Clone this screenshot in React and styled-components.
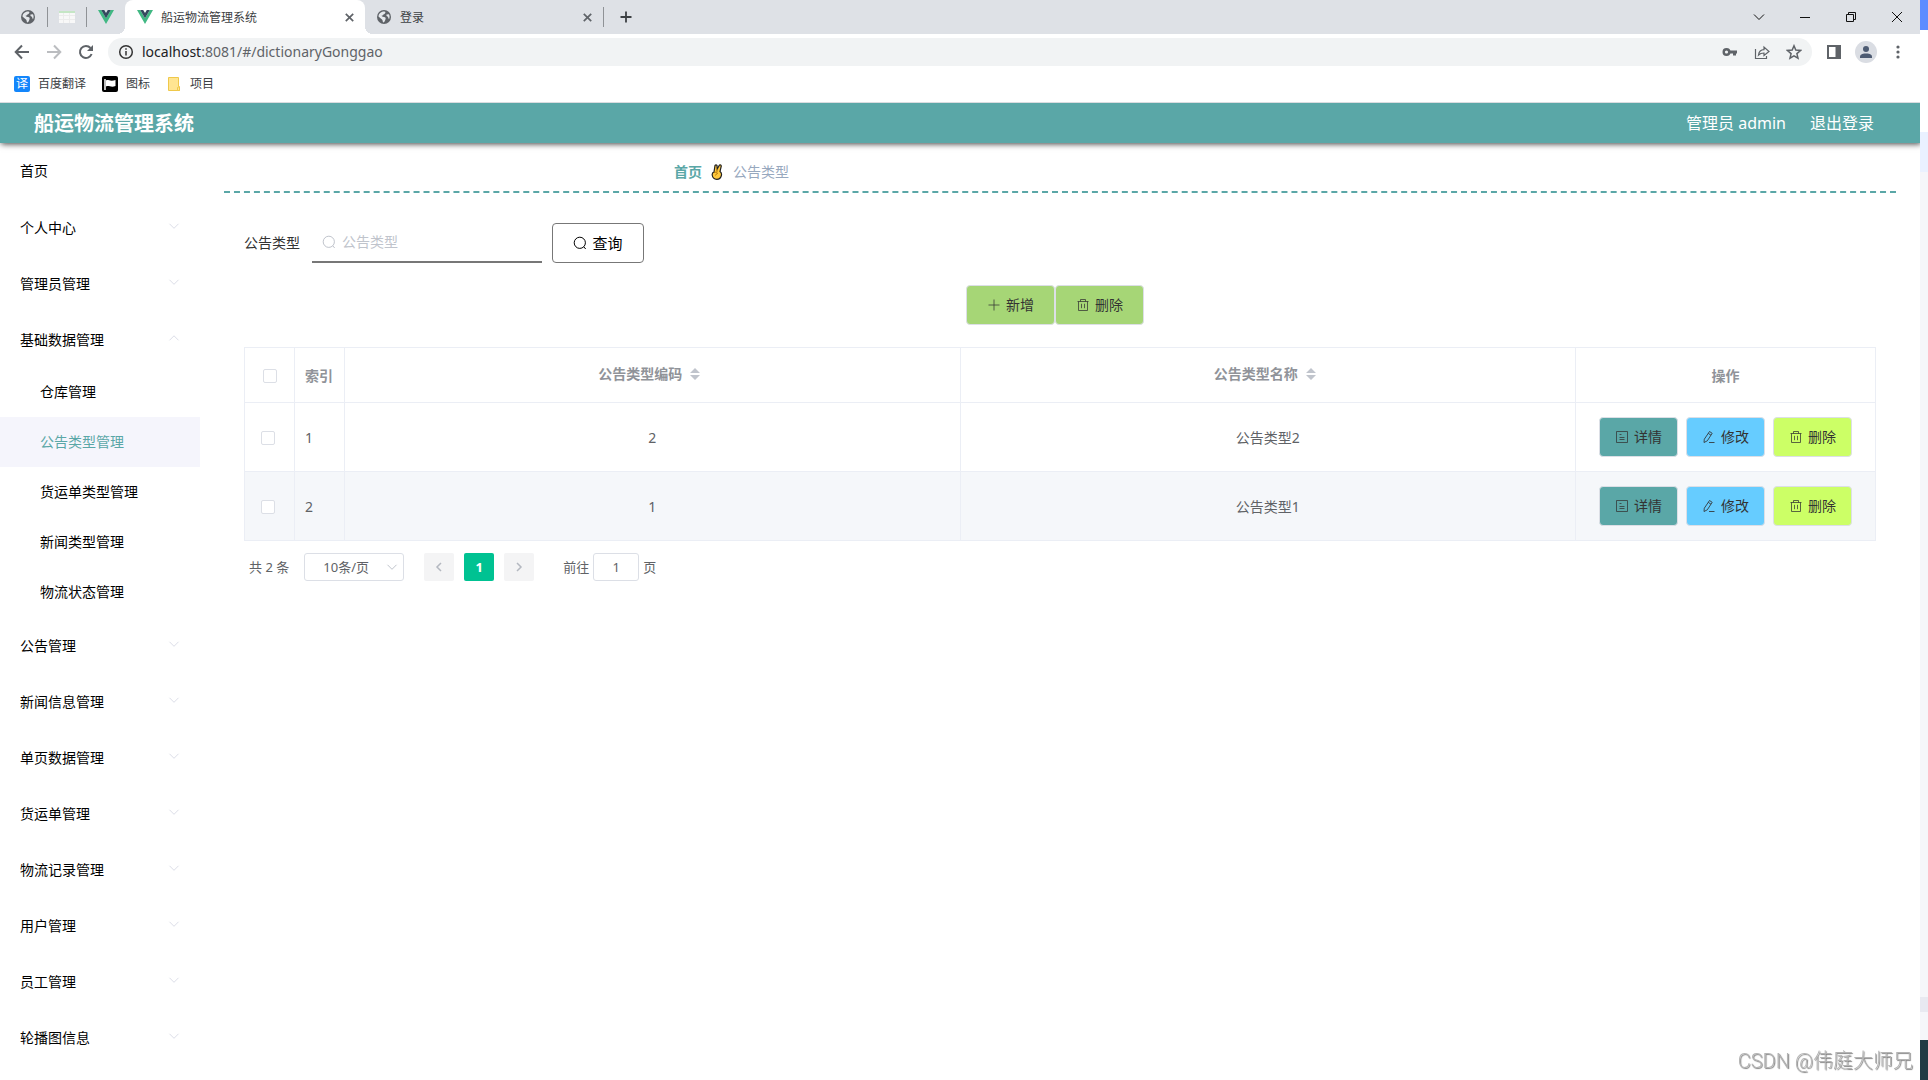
import React from "react";
import styled, { createGlobalStyle, css } from "styled-components";

const teal = "#5aa7a7";
const line = "#ebeef5";

const Global = createGlobalStyle`
  *, *::before, *::after { box-sizing: border-box; }
  html, body { margin: 0; }
  body {
    background: #fff;
    color: #333;
    font: 14px/20px "Noto Sans", "Noto Sans CJK SC", sans-serif;
  }
  button, input, select { font: inherit; color: inherit; margin: 0; }
  a { color: inherit; text-decoration: none; }
  svg { display: block; flex: none; }
`;

/* ---------- desktop ---------- */
const Desktop = styled.div`
  display: flex;
  min-height: 100vh;
`;
const Window = styled.div`
  flex: 1;
  min-width: 0;
  display: flex;
  flex-direction: column;
`;
const Backdrop = styled.div`
  width: 8px;
  display: flex;
  flex-direction: column;
`;
const Band = styled.div`
  background: ${(p) => p.$color};
  ${(p) => (p.$size ? `height: ${p.$size}px;` : "flex: 1;")}
`;

/* ---------- browser chrome ---------- */
const TabStrip = styled.div`
  display: flex;
  align-items: center;
  height: 34px;
  background: #dee1e6;
  font-size: 12px;
  color: #3c4043;
`;
const PlainButton = styled.button`
  display: grid;
  place-items: center;
  width: ${(p) => p.$w || 32}px;
  height: 28px;
  padding: 0;
  border: 0;
  background: none;
  color: ${(p) => p.$color || "#5f6368"};
`;
const Pinned = styled.div`
  display: flex;
  align-items: center;
  padding-left: 9px;
`;
const Divider = styled.span`
  width: 1px;
  height: 20px;
  background: #8f9296;
`;
const Tab = styled.div`
  position: relative;
  display: flex;
  align-items: center;
  gap: 8px;
  width: ${(p) => (p.$active ? 240 : 238)}px;
  height: 34px;
  padding: 6px 4px 6px ${(p) => (p.$active ? 12 : 11)}px;
  ${(p) =>
    p.$active &&
    css`
      background: #fff;
      border-radius: 8px 8px 0 0;
      &::before,
      &::after {
        content: "";
        position: absolute;
        bottom: 0;
        width: 8px;
        height: 8px;
      }
      &::before {
        left: -8px;
        background: radial-gradient(circle at 0 0, transparent 8px, #fff 8px);
      }
      &::after {
        right: -8px;
        background: radial-gradient(circle at 100% 0, transparent 8px, #fff 8px);
      }
    `}
`;
const TabTitle = styled.span`
  flex: 1;
  padding-top: 2px;
  line-height: 20px;
`;
const WindowControls = styled.div`
  display: flex;
  margin-left: auto;
  height: 28px;
`;
const Toolbar = styled.div`
  display: flex;
  align-items: center;
  height: 36px;
  padding: 0 6px;
`;
const Omnibox = styled.div`
  flex: 1;
  display: flex;
  align-items: center;
  height: 28px;
  margin: 0 6px;
  padding: 0 2px 0 10px;
  border-radius: 14px;
  background: #f1f3f4;
`;
const Address = styled.span`
  flex: 1;
  padding-left: 8px;
  color: #5f6368;
  b { font-weight: 400; color: #202124; }
`;
const Avatar = styled.span`
  display: grid;
  place-items: center;
  width: 22px;
  height: 22px;
  border-radius: 50%;
  background: #dadde3;
`;
const Bookmarks = styled.nav`
  display: flex;
  align-items: center;
  gap: 16px;
  height: 33px;
  padding: 0 14px 4px;
  border-bottom: 1px solid #dadce0;
  font-size: 12px;
  color: #3c4043;
`;
const Bookmark = styled.a`
  display: flex;
  align-items: center;
  gap: 8px;
`;
const Badge = styled.span`
  display: grid;
  place-items: center;
  width: 16px;
  height: 16px;
  border-radius: 2px;
  background: #1386fb;
  color: #fff;
  font-size: 12px;
  line-height: 16px;
`;

/* ---------- application ---------- */
const AppHeader = styled.header`
  display: flex;
  align-items: center;
  justify-content: space-between;
  height: 40px;
  padding: 0 46px 0 34px;
  background: ${teal};
  color: #fff;
  box-shadow: 1px 1px 6px rgba(0, 0, 0, 0.75);
  clip-path: inset(0 0 -10px 0);
  z-index: 1;
`;
const Brand = styled.h1`
  margin: 0;
  padding-top: 2px;
  font-size: 20px;
  line-height: 28px;
  font-weight: 700;
`;
const Account = styled.div`
  display: flex;
  gap: 24px;
  font-size: 16px;
`;
const Body = styled.div`
  flex: 1;
  display: flex;
`;
const Sidebar = styled.nav`
  width: 200px;
  color: #000;
`;
const MenuItem = styled.a`
  display: flex;
  align-items: center;
  justify-content: space-between;
  height: ${(p) => (p.$sub ? 50 : 56)}px;
  padding: ${(p) => (p.$group ? 2 : 0)}px 20px 0 ${(p) => (p.$sub ? 40 : 20)}px;
  ${(p) => p.$active && `background: #f5f5fc; color: ${teal};`}
`;
const Arrow = styled.span`
  padding-bottom: 5px;
  color: #dcdee8;
`;
const Main = styled.main`
  flex: 1;
  min-width: 0;
  padding: 0 24px;
`;
const Breadcrumb = styled.nav`
  display: flex;
  align-items: center;
  gap: 8px;
  height: 50px;
  padding: 10px 0 0 450px;
  border-bottom: 2px dashed ${teal};
  color: #97a8be;
  a { color: ${teal}; font-weight: 700; }
`;
const Content = styled.section`
  padding: 30px 20px;
`;
const SearchForm = styled.form`
  display: flex;
  align-items: center;
  height: 40px;
`;
const SearchLabel = styled.label`
  margin-right: 12px;
`;
const SearchField = styled.div`
  display: flex;
  align-items: center;
  gap: 6px;
  width: 230px;
  height: 40px;
  margin-right: 10px;
  padding: 0 10px;
  border-bottom: 2px solid #777;
  color: #c0c4cc;
  input {
    flex: 1;
    min-width: 0;
    padding: 0;
    border: 0;
    outline: 0;
    background: none;
    color: #333;
  }
  input::placeholder { color: #c0c4cc; opacity: 1; }
`;
const Button = styled.button`
  display: inline-flex;
  align-items: center;
  justify-content: center;
  gap: 5px;
  width: ${(p) => p.$w}px;
  height: 40px;
  padding: 0;
  border: 1px solid #dcdfe6;
  border-radius: 4px;
  background: ${(p) => p.$bg};
  color: #333;
`;
const SearchButton = styled(Button)`
  border-color: #777;
  color: #000;
  font-size: 15px;
`;
const Actions = styled.div`
  display: flex;
  justify-content: center;
  margin: 22px 10px 22px 0;
`;
const Table = styled.table`
  width: 100%;
  table-layout: fixed;
  border-collapse: collapse;
  color: #606266;
`;
const Col = styled.col`
  width: ${(p) => (p.$w ? `${p.$w}px` : "auto")};
`;
const Row = styled.tr`
  height: ${(p) => (p.$head ? 55 : 69)}px;
  background: ${(p) => (p.$striped ? "#f5f7fa" : "#fff")};
`;
const cell = css`
  padding: ${(p) => (p.$text ? 2 : 0)}px ${(p) => (p.$tick ? 4 : 0)}px 0 ${(p) => (p.$left ? 10 : 0)}px;
  border: 1px solid ${line};
  text-align: ${(p) => (p.$left ? "left" : "center")};
  vertical-align: middle;
`;
const Th = styled.th`
  ${cell}
  color: #909399;
  font-weight: 700;
`;
const Td = styled.td`
  ${cell}
`;
const SortLabel = styled.div`
  display: flex;
  align-items: center;
  justify-content: center;
  gap: 8px;
  padding: 0 6px 4px 0;
`;
const Tick = styled.input`
  appearance: none;
  display: inline-block;
  vertical-align: middle;
  width: 14px;
  height: 14px;
  border: 1px solid #dcdfe6;
  border-radius: 2px;
  background: #fff;
`;
const RowActions = styled.div`
  display: flex;
  justify-content: center;
  gap: 8px;
`;
const Pagination = styled.div`
  display: flex;
  align-items: center;
  padding: 12px 5px;
  font-size: 13px;
  color: #606266;
`;
const PageSize = styled.div`
  display: grid;
  align-items: center;
  width: 100px;
  margin: 0 20px 0 15px;
  color: #c0c4cc;
  select, svg { grid-area: 1 / 1; }
  select {
    appearance: none;
    height: 28px;
    padding: 0 16px 0 0;
    border: 1px solid #dcdfe6;
    border-radius: 3px;
    background: #fff;
    color: #606266;
    text-align: center;
    text-align-last: center;
  }
  svg { justify-self: end; margin-right: 6px; pointer-events: none; }
`;
const Pager = styled.div`
  display: flex;
  gap: 10px;
`;
const PageButton = styled.button`
  display: grid;
  place-items: center;
  width: 30px;
  height: 28px;
  padding: 0;
  border: 0;
  border-radius: 2px;
  background: ${(p) => (p.$current ? "#00c292" : "#f4f4f5")};
  color: ${(p) => (p.$current ? "#fff" : "#b4b8c0")};
  font-weight: 700;
`;
const Jump = styled.label`
  display: flex;
  align-items: center;
  gap: 4px;
  margin-left: 29px;
  input {
    width: 46px;
    height: 28px;
    padding: 0;
    border: 1px solid #dcdfe6;
    border-radius: 3px;
    background: #fff;
    text-align: center;
  }
`;
const Watermark = styled.div`
  position: fixed;
  right: 15px;
  bottom: 5px;
  color: #b4b4b4;
  font: 300 20px/28px Roboto, "Noto Sans CJK SC", sans-serif;
  text-shadow: 1px 1px 1px #808080;
`;

/* ---------- icons ---------- */
const Icon = ({ size = 14, width, box = 14, sw = 1, children }) => (
  <svg
    width={width || size}
    height={size}
    viewBox={`0 0 ${box} ${box}`}
    fill="none"
    stroke="currentColor"
    strokeWidth={sw}
    aria-hidden="true"
  >
    {children}
  </svg>
);
const Globe = () => (
  <Icon size={16} box={16}>
    <circle cx="8" cy="8" r="7" fill="#5f6368" stroke="none" />
    <path
      d="M8.500 2.400C10.300 3 9 4.600 8 5.200 7 5.600 7.200 6.400 6 6.600 5 6.800 6.200 8 8 8c1.600 0 2 1 1.500 2.200C9 11.400 8.600 13 7.400 13.600 6.400 13 7 11.400 6 10.600 4.800 9.600 3.500 8.400 2.500 7.400 2.600 4.600 5 2.200 8.500 2.400ZM10.500 5.500l2.500-.3c.8 1.500.8 3.500 0 5-.8-.6-.6-2-1.500-2.600-.8-.4-1.400-1.200-1-2.100Z"
      fill="#e4e7eb"
      stroke="none"
    />
  </Icon>
);
const Vue = () => (
  <Icon size={16} box={16}>
    <path d="M0 1h3.200L8 9.300 12.800 1H16L8 15Z" fill="#41b883" stroke="none" />
    <path d="M3.200 1H6.200L8 4.100 9.800 1h3L8 9.300Z" fill="#35495e" stroke="none" />
  </Icon>
);
const Sheet = () => (
  <Icon size={16} box={16}>
    <path d="M0 2h16v12H0z" fill="#f8f8f8" stroke="none" />
    <path d="M0 2h16v2H0z" fill="#c5e6c5" stroke="none" />
    <path d="M0 6.500h16M0 10.500h16M4.500 4v10M10.500 4v10" stroke="#ececec" />
  </Icon>
);
const Close = () => (
  <Icon size={9} box={8} sw={1.5}>
    <path d="M.7.700l6.600 6.600M7.300.700L.7 7.300" />
  </Icon>
);
const Plus = () => (
  <Icon size={12} box={12} sw={1.8}>
    <path d="M6 .5v11M.5 6h11" />
  </Icon>
);
const Chevron = ({ up }) => (
  <Icon size={12} box={12}>
    <path d={up ? "M1.500 8.300L6 3.800l4.500 4.500" : "M1.500 3.800L6 8.300l4.500-4.500"} />
  </Icon>
);
const Magnifier = () => (
  <Icon>
    <circle cx="6.800" cy="6.800" r="5.600" />
    <path d="M10.800 10.800l1.900 2.200" />
  </Icon>
);
const Add = () => (
  <Icon>
    <path d="M7 1.500v11M1.500 7h11" opacity=".75" />
  </Icon>
);
const Trash = () => (
  <Icon>
    <path
      d="M1.500 3.500h11M4.500 3.500v-2h5v2M2.500 3.500v9h9v-9M5.500 5.800v4.400M8.500 5.800v4.400"
      opacity=".75"
    />
  </Icon>
);
const Doc = () => (
  <Icon>
    <path d="M1.500 1.500h11v11h-11zM4.500 4.500h2M4.500 7.500h5M4.500 9.500h5" opacity=".75" />
  </Icon>
);
const Pen = () => (
  <Icon>
    <path
      d="M7.500 1.500L10.200 3.300 5.300 10.800 2 12.500 2.300 9.200ZM6.300 3.400L9 5.200M7 12.500h5.500"
      opacity=".85"
    />
  </Icon>
);
const SortCarets = () => (
  <svg width="10" height="12" viewBox="0 0 10 12" fill="#c0c4cc" aria-hidden="true">
    <path d="M0 5L5 0 10 5ZM0 7L5 12 10 7Z" />
  </svg>
);
const Fingers = () => (
  <svg width="15" height="16" viewBox="1 0 15 16" aria-hidden="true">
    <path
      d="M5 8L6 1.500Q7 .3 8 1.500L8.200 5 10.500 1Q12 .3 12.300 2L11 7.500Q13 9 12.400 11.500 11.500 15.300 7.800 15.300 3.800 15.300 3.200 11 3 8.500 5 8Z"
      fill="#ffc83d"
      stroke="#222"
      strokeWidth="1.200"
    />
    <path d="M5 8.500Q8 7 8.500 9.500 6.500 10 6.500 11.500M8.200 5L8 8" fill="none" stroke="#a86a00" strokeWidth=".8" />
  </svg>
);

/* ---------- data ---------- */
const menu = [
  { name: "首页", leaf: true },
  { name: "个人中心" },
  { name: "管理员管理" },
  {
    name: "基础数据管理",
    children: ["仓库管理", "公告类型管理", "货运单类型管理", "新闻类型管理", "物流状态管理"],
  },
  { name: "公告管理" },
  { name: "新闻信息管理" },
  { name: "单页数据管理" },
  { name: "货运单管理" },
  { name: "物流记录管理" },
  { name: "用户管理" },
  { name: "员工管理" },
  { name: "轮播图信息" },
];
const rows = [
  { code: 2, name: "公告类型2" },
  { code: 1, name: "公告类型1" },
];

function BrowserChrome() {
  return (
    <>
      <TabStrip>
        <Pinned>
          <PlainButton $w={38} aria-label="固定标签页"><Globe /></PlainButton>
          <Divider />
          <PlainButton $w={38} aria-label="表格"><Sheet /></PlainButton>
          <Divider />
          <PlainButton $w={38} aria-label="Vue"><Vue /></PlainButton>
        </Pinned>
        <Tab $active>
          <Vue />
          <TabTitle>船运物流管理系统</TabTitle>
          <PlainButton $w={24} aria-label="关闭"><Close /></PlainButton>
        </Tab>
        <Tab>
          <Globe />
          <TabTitle>登录</TabTitle>
          <PlainButton $w={24} aria-label="关闭"><Close /></PlainButton>
        </Tab>
        <Divider />
        <PlainButton $w={44} $color="#3c4043" aria-label="新标签页"><Plus /></PlainButton>
        <WindowControls>
          <PlainButton $w={46} $color="#111" aria-label="搜索标签页">
            <Icon size={12} box={12}><path d="M1 3.500l5 5 5-5" /></Icon>
          </PlainButton>
          <PlainButton $w={46} $color="#111" aria-label="最小化">
            <Icon size={10} box={10}><path d="M0 5.500h10" /></Icon>
          </PlainButton>
          <PlainButton $w={46} $color="#111" aria-label="还原">
            <Icon size={10} box={10}><path d="M.5 2.500h7v7h-7zM2.500 2V.5h7v7H8" /></Icon>
          </PlainButton>
          <PlainButton $w={46} $color="#111" aria-label="关闭窗口">
            <Icon size={10} box={10}><path d="M0 0l10 10M10 0L0 10" /></Icon>
          </PlainButton>
        </WindowControls>
      </TabStrip>
      <Toolbar>
        <PlainButton aria-label="后退">
          <Icon size={16} box={16} sw={2}><path d="M15 8H2M8 1.500L1.700 8 8 14.500" /></Icon>
        </PlainButton>
        <PlainButton $color="#bbbdc0" aria-label="前进">
          <Icon size={16} box={16} sw={2}><path d="M1 8h13M8 1.500L14.300 8 8 14.500" /></Icon>
        </PlainButton>
        <PlainButton aria-label="重新加载">
          <Icon size={16} box={16} sw={2}>
            <path d="M13.600 10A6 6 0 1 1 12.500 4" />
            <path d="M15 1v6H9Z" fill="currentColor" stroke="none" />
          </Icon>
        </PlainButton>
        <Omnibox>
          <Icon size={16} box={16} sw={1.5}>
            <circle cx="8" cy="8" r="6.300" />
            <path d="M8 7v4.500M8 4.200v1.600" />
          </Icon>
          <Address><b>localhost</b>:8081/#/dictionaryGonggao</Address>
          <PlainButton aria-label="密码">
            <Icon size={16} box={16} sw={2.4}>
              <circle cx="4.500" cy="8" r="2.800" />
              <path d="M7 8h8M12.500 8v3.500" strokeWidth="3" />
            </Icon>
          </PlainButton>
          <PlainButton aria-label="分享">
            <Icon size={16} box={16} sw={1.2}>
              <path d="M1.500 5v9.500H12.500V12M4.500 11C5 7.500 7 5.800 10 5.700V3L15 7.500 10 11.500V9C7.500 9 6 9.500 4.500 11Z" />
            </Icon>
          </PlainButton>
          <PlainButton aria-label="收藏">
            <Icon size={16} box={16} sw={1.5}>
              <path d="M8 1.800l1.800 4.300 4.700.4-3.600 3.100 1.100 4.600L8 11.800l-4 2.400 1.100-4.600L1.500 6.500l4.700-.4Z" />
            </Icon>
          </PlainButton>
        </Omnibox>
        <PlainButton aria-label="侧边栏">
          <Icon size={14} sw={2}><path d="M1 1h12v12H1z" /><path d="M10.500 1v12" strokeWidth="4" /></Icon>
        </PlainButton>
        <PlainButton aria-label="用户">
          <Avatar>
            <Icon size={14}>
              <circle cx="7" cy="4" r="3" fill="#4d5b72" stroke="none" />
              <path d="M1 13V11.500C1 9 5 8.500 7 8.500s6 .5 6 3V13Z" fill="#4d5b72" stroke="none" />
            </Icon>
          </Avatar>
        </PlainButton>
        <PlainButton aria-label="菜单">
          <Icon size={14}>
            <g fill="currentColor" stroke="none">
              <circle cx="7" cy="2" r="1.600" /><circle cx="7" cy="7" r="1.600" /><circle cx="7" cy="12" r="1.600" />
            </g>
          </Icon>
        </PlainButton>
      </Toolbar>
      <Bookmarks>
        <Bookmark href="#"><Badge>译</Badge>百度翻译</Bookmark>
        <Bookmark href="#">
          <Icon size={16} box={16}>
            <rect width="16" height="16" rx="2" fill="#000" stroke="none" />
            <path d="M3 3v11" stroke="#fff" strokeWidth="1.500" />
            <path d="M4 4.500C6 3 8 6 13.500 4v6C9 12 7 9 4 10.500Z" fill="#fff" stroke="none" />
          </Icon>
          图标
        </Bookmark>
        <Bookmark href="#">
          <Icon size={16} box={16}>
            <path d="M2.500 1.500h10V10.500l1 4H2.500z" fill="#ffe591" stroke="#efc84a" />
            <path d="M11.500 14.500v-3l2-1v4z" fill="#ffe591" stroke="#efc84a" />
          </Icon>
          项目
        </Bookmark>
      </Bookmarks>
    </>
  );
}

function Menu() {
  return (
    <Sidebar>
      {menu.map((m) => (
        <React.Fragment key={m.name}>
          <MenuItem href="#" $group={!m.leaf}>
            {m.name}
            {!m.leaf && <Arrow><Chevron up={!!m.children} /></Arrow>}
          </MenuItem>
          {m.children?.map((c) => (
            <MenuItem key={c} href="#" $sub $active={c === "公告类型管理"}>{c}</MenuItem>
          ))}
        </React.Fragment>
      ))}
    </Sidebar>
  );
}

export default function App() {
  return (
    <Desktop>
      <Global />
      <Window>
        <BrowserChrome />
        <AppHeader>
          <Brand>船运物流管理系统</Brand>
          <Account>
            <span>管理员 admin</span>
            <a href="#">退出登录</a>
          </Account>
        </AppHeader>
        <Body>
          <Menu />
          <Main>
            <Breadcrumb>
              <a href="#">首页</a>
              <Fingers />
              <span>公告类型</span>
            </Breadcrumb>
            <Content>
              <SearchForm onSubmit={(e) => e.preventDefault()}>
                <SearchLabel htmlFor="type">公告类型</SearchLabel>
                <SearchField>
                  <Magnifier />
                  <input id="type" placeholder="公告类型" />
                </SearchField>
                <SearchButton $w={92} $bg="#fff"><Magnifier />查询</SearchButton>
              </SearchForm>
              <Actions>
                <Button type="button" $w={89} $bg="#a6d676"><Add />新增</Button>
                <Button type="button" $w={89} $bg="#a6d676"><Trash />删除</Button>
              </Actions>
              <Table>
                <colgroup>
                  <Col $w={50} /><Col $w={50} /><Col /><Col /><Col $w={300} />
                </colgroup>
                <thead>
                  <Row $head>
                    <Th><Tick type="checkbox" aria-label="全选" /></Th>
                    <Th $left $text>索引</Th>
                    <Th $text><SortLabel>公告类型编码<SortCarets /></SortLabel></Th>
                    <Th $text><SortLabel>公告类型名称<SortCarets /></SortLabel></Th>
                    <Th $text>操作</Th>
                  </Row>
                </thead>
                <tbody>
                  {rows.map((r, i) => (
                    <Row key={r.code} $striped={i % 2 === 1}>
                      <Td $tick><Tick type="checkbox" aria-label={r.name} /></Td>
                      <Td $left $text>{i + 1}</Td>
                      <Td $text>{r.code}</Td>
                      <Td $text>{r.name}</Td>
                      <Td>
                        <RowActions>
                          <Button $w={79} $bg={teal}><Doc />详情</Button>
                          <Button $w={79} $bg="#66ccff"><Pen />修改</Button>
                          <Button $w={79} $bg="#ccff66"><Trash />删除</Button>
                        </RowActions>
                      </Td>
                    </Row>
                  ))}
                </tbody>
              </Table>
              <Pagination>
                <span>共 2 条</span>
                <PageSize>
                  <select aria-label="每页条数"><option>10条/页</option></select>
                  <Chevron />
                </PageSize>
                <Pager>
                  <PageButton aria-label="上一页">
                    <Icon size={12} box={12} sw={1.5}><path d="M8 2L4 6l4 4" /></Icon>
                  </PageButton>
                  <PageButton $current>1</PageButton>
                  <PageButton aria-label="下一页">
                    <Icon size={12} box={12} sw={1.5}><path d="M4 2l4 4-4 4" /></Icon>
                  </PageButton>
                </Pager>
                <Jump>前往<input defaultValue="1" />页</Jump>
              </Pagination>
            </Content>
          </Main>
        </Body>
      </Window>
      <Backdrop>
        <Band $color="#5e8cff" $size={30} />
        <Band $color="#ffffff" $size={102} />
        <Band $color="#eaf1ff" $size={40} />
        <Band $color="#f5f6fa" />
        <Band $color="#e8e9f1" $size={15} />
        <Band $color="#f5f6fa" $size={28} />
        <Band $color="#223b44" $size={40} />
      </Backdrop>
      <Watermark>CSDN @伟庭大师兄</Watermark>
    </Desktop>
  );
}
